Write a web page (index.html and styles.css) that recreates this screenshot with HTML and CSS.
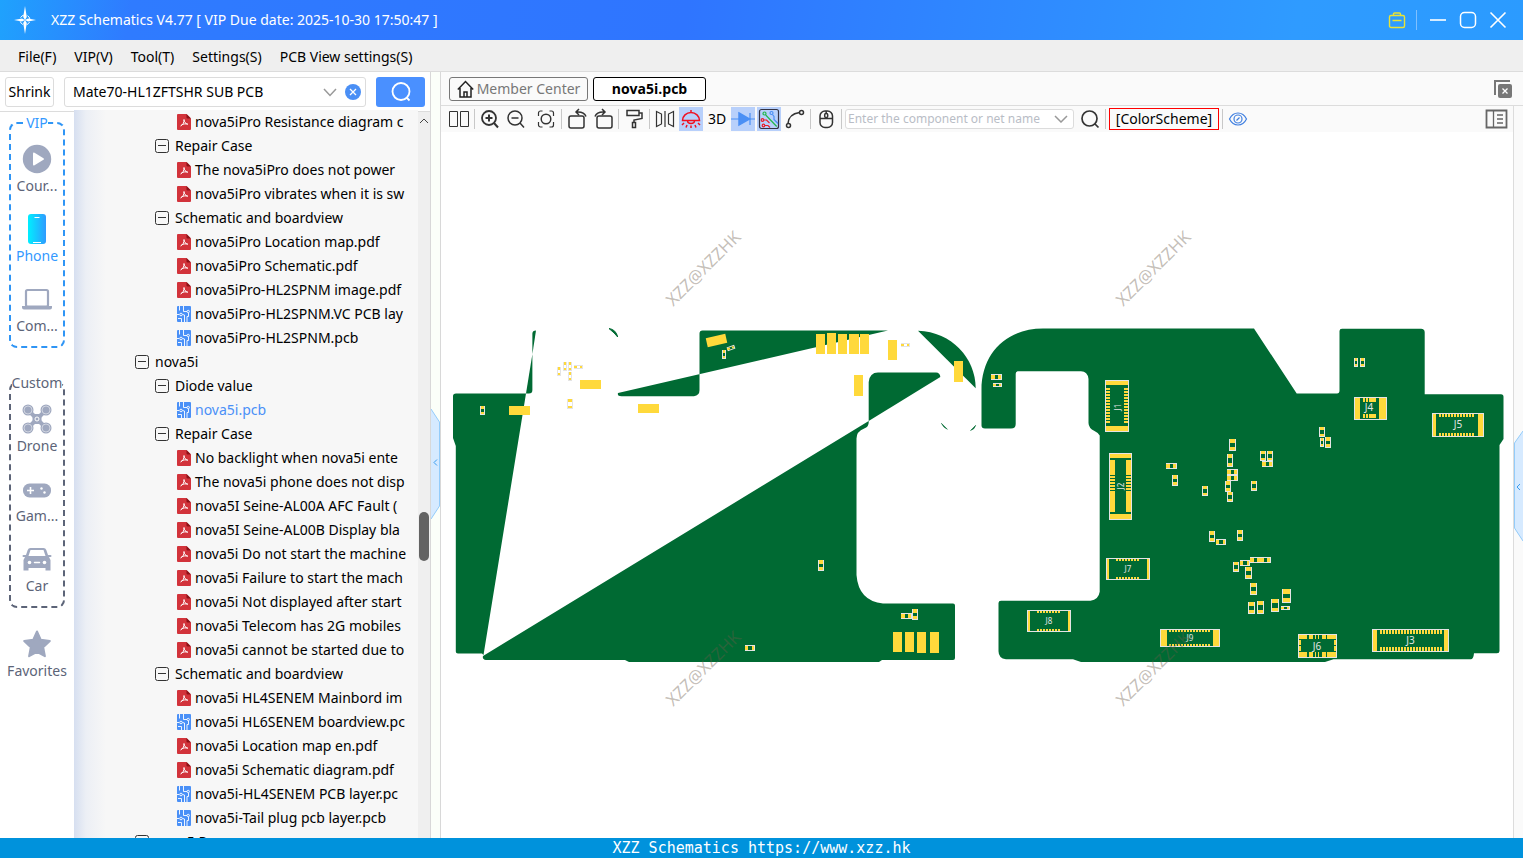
FILE: index.html
```html
<!DOCTYPE html>
<html lang="en">
<head>
  <meta charset="UTF-8">
  <meta name="viewport" content="width=device-width, initial-scale=1.0">
  <title>XZZ Schematics</title>
  <link rel="stylesheet" href="styles.css">
</head>
<body>
  <!-- Shared tree icons -->
  <svg class="sprite" aria-hidden="true">
    <symbol id="i-pdf" viewBox="0 0 14 16">
      <path d="M1 0h8.500L14 4.500V15a1 1 0 0 1-1 1H1a1 1 0 0 1-1-1V1a1 1 0 0 1 1-1z" fill="#d2333b"/>
      <path d="M9.500 0 14 4.500H10.500a1 1 0 0 1-1-1z" fill="#8c1218"/>
      <path d="M7 5.500c.3 3-1.200 5.500-3.500 6.500M7 5.500c0 2.500 1.500 4 4 4.800M4.500 10.800c2-.9 4-1.200 6-.7" fill="none" stroke="#fff"/>
    </symbol>
    <symbol id="i-pcb" viewBox="0 0 14 16">
      <rect width="14" height="16" rx="1" fill="#4a90f7"/>
      <path d="M2.500 0v4.500M6.500 0v5.500h3.500M0 8.500h2M5.500 8.500l2 .5v7M10 16v-5.500h1.500V7M4.500 16v-3.500H1" fill="none" stroke="#fff" stroke-width=".9"/>
      <g fill="#4a90f7" stroke="#fff" stroke-width=".9"><circle cx="11.200" cy="5.500" r="1.200"/><circle cx="4" cy="8.500" r="1.300"/></g>
    </symbol>
    <symbol id="i-minus" viewBox="0 0 14 14">
      <rect x=".5" y=".5" width="13" height="13" rx="2" fill="none" stroke="#333"/>
      <path d="M3 6.500h8" stroke="#333"/>
    </symbol>
  </svg>

  <header class="titlebar">
    <svg class="logo" viewBox="0 0 24 30">
      <path d="M12 1l1.800 11L12 15l-1.800-3zM12 29l-1.800-11L12 15l1.800 3zM1 15l8-1.500 3 1.500-3 1.500zM23 15l-8-1.500-3 1.500 3 1.500z" fill="#fff"/>
      <circle cx="12" cy="15" r="5" fill="none" stroke="#fff" stroke-dasharray="4 3.850" stroke-dashoffset="-2"/>
    </svg>
    <h1 class="app-title">XZZ Schematics V4.77 [ VIP Due date: 2025-10-30 17:50:47 ]</h1>
    <button class="win-btn toolbox" aria-label="Toolbox">
      <svg viewBox="0 0 18 18" fill="none" stroke="#e8e337" stroke-width="1.400"><rect x="1.500" y="4.500" width="15" height="12" rx="1.500"/><path d="M5.500 4.500V3a1 1 0 0 1 1-1h5a1 1 0 0 1 1 1v1.500M4.500 9.500h9"/></svg>
    </button>
    <span class="win-sep"></span>
    <button class="win-btn" aria-label="Minimize">
      <svg viewBox="0 0 18 18" stroke="#fff" stroke-width="1.600"><path d="M1 9h16"/></svg>
    </button>
    <button class="win-btn" aria-label="Maximize">
      <svg viewBox="0 0 18 18" fill="none" stroke="#fff" stroke-width="1.500"><rect x="1.500" y="1.500" width="15" height="15" rx="4"/></svg>
    </button>
    <button class="win-btn" aria-label="Close">
      <svg viewBox="0 0 18 18" stroke="#fff" stroke-width="1.600"><path d="M1.500 1.500l15 15M16.500 1.500l-15 15"/></svg>
    </button>
  </header>

  <nav class="menubar">
    <button>File(F)</button>
    <button>VIP(V)</button>
    <button>Tool(T)</button>
    <button>Settings(S)</button>
    <button>PCB View settings(S)</button>
  </nav>

  <main class="workspace">
    <section class="left">
      <form class="search-row">
        <button type="button" class="shrink">Shrink</button>
        <div class="combo">
          <input type="text" aria-label="Search model" value="Mate70-HL1ZFTSHR SUB PCB">
          <button type="button" aria-label="History"><svg width="14" height="9" viewBox="0 0 14 9" fill="none" stroke="#999" stroke-width="1.500"><path d="M1 1l6 6.500L13 1"/></svg></button>
          <button type="button" aria-label="Clear"><svg width="16" height="16" viewBox="0 0 16 16"><circle cx="8" cy="8" r="8" fill="#4a8ff5"/><path d="M5 5l6 6M11 5l-6 6" stroke="#fff" stroke-width="1.300"/></svg></button>
        </div>
        <button type="button" class="search-btn" aria-label="Search">
          <svg width="20" height="20" viewBox="0 0 20 20" fill="none" stroke="#fff" stroke-width="1.800"><circle cx="10" cy="9.500" r="8.500"/><path d="M15.500 15.500l3 3"/></svg>
        </button>
      </form>

      <div class="left-body">
        <aside class="sidebar">
          <fieldset class="group vip">
            <legend>VIP</legend>
            <button class="cat">
              <svg viewBox="0 0 30 30"><circle cx="15" cy="15" r="14.200" fill="#9fa8bf"/><path d="M11 9.500v11a1 1 0 0 0 1.500.8l9-5.500a1 1 0 0 0 0-1.600l-9-5.500a1 1 0 0 0-1.500.8z" fill="#fff"/></svg>
              <span>Cour...</span>
            </button>
            <button class="cat active">
              <svg viewBox="0 0 30 30"><defs><linearGradient id="phone"><stop offset="0" stop-color="#00efff"/><stop offset="1" stop-color="#2f9bff"/></linearGradient></defs><rect x="6" y="0" width="18" height="30" rx="3" fill="url(#phone)"/><path d="M12.500 3.500h5M11 28.500h8" stroke="#fff" stroke-width="1.200"/></svg>
              <span>Phone</span>
            </button>
            <button class="cat">
              <svg viewBox="0 0 30 30"><rect x="4" y="6" width="22" height="16.500" rx="1.500" fill="none" stroke="#9fa8bf" stroke-width="2.200"/><path d="M0 22h11l1.500 1h5l1.500-1h11v1.500a2 2 0 0 1-2 2H2a2 2 0 0 1-2-2z" fill="#9fa8bf"/></svg>
              <span>Com...</span>
            </button>
          </fieldset>
          <fieldset class="group custom">
            <legend>Custom</legend>
            <button class="cat">
              <svg viewBox="0 0 30 30"><path d="M6 6l18 18M24 6L6 24" stroke="#9fa8bf" stroke-width="4"/><rect x="10.500" y="10" width="9" height="10" rx="3" fill="#9fa8bf"/><circle cx="15" cy="15" r="2" fill="#9fa8bf" stroke="#fff"/><g fill="#9fa8bf"><circle cx="6" cy="6" r="5.500"/><circle cx="24" cy="6" r="5.500"/><circle cx="6" cy="24" r="5.500"/><circle cx="24" cy="24" r="5.500"/></g><g fill="none" stroke="#fff" stroke-width=".5"><circle cx="6" cy="6" r="4"/><circle cx="24" cy="6" r="4"/><circle cx="6" cy="24" r="4"/><circle cx="24" cy="24" r="4"/></g></svg>
              <span>Drone</span>
            </button>
            <button class="cat">
              <svg viewBox="0 0 30 30"><rect x="1" y="9.500" width="28" height="14" rx="6.500" fill="#9fa8bf"/><path d="M8.500 13v7M5 16.500h7" stroke="#fff" stroke-width="1.600"/><circle cx="19.500" cy="14.500" r="1.200" fill="#fff"/><circle cx="22.500" cy="18.500" r="1.200" fill="#fff"/></svg>
              <span>Gam...</span>
            </button>
            <button class="cat">
              <svg viewBox="0 0 30 30"><path fill-rule="evenodd" d="M8.500 4h13a3 3 0 0 1 2.800 2l1.700 5h2.500a.8.800 0 0 1 0 2H27l1.500 3v10.500h-5V24h-17v2.500h-5V16L3 13H1.500a.8.800 0 0 1 0-2H4l1.700-5A3 3 0 0 1 8.500 4zM8.500 6L6.500 12h17l-2-6z" fill="#9fa8bf"/><circle cx="7.500" cy="18.500" r="1.800" fill="#fff"/><circle cx="22.500" cy="18.500" r="1.800" fill="#fff"/><path d="M12.500 18.500h5" stroke="#fff" stroke-width="1.500" stroke-linecap="round"/></svg>
              <span>Car</span>
            </button>
          </fieldset>
          <button class="cat favorites">
            <svg viewBox="0 0 30 30"><path d="M15 2.500l3.800 8.300 9 1.200-6.600 6.200 1.700 9L15 22.800l-7.900 4.400 1.700-9L2.200 12l9-1.200z" fill="#9fa8bf" stroke="#9fa8bf" stroke-width="2" stroke-linejoin="round"/></svg>
            <span>Favorites</span>
          </button>
        </aside>

        <ul class="tree">
          <li class="file"><svg><use href="#i-pdf"/></svg><a href="#">nova5iPro Resistance diagram c</a></li>
          <li class="folder"><svg><use href="#i-minus"/></svg><span>Repair Case</span></li>
          <li class="file"><svg><use href="#i-pdf"/></svg><a href="#">The nova5iPro does not power</a></li>
          <li class="file"><svg><use href="#i-pdf"/></svg><a href="#">nova5iPro vibrates when it is sw</a></li>
          <li class="folder"><svg><use href="#i-minus"/></svg><span>Schematic and boardview</span></li>
          <li class="file"><svg><use href="#i-pdf"/></svg><a href="#">nova5iPro Location map.pdf</a></li>
          <li class="file"><svg><use href="#i-pdf"/></svg><a href="#">nova5iPro Schematic.pdf</a></li>
          <li class="file"><svg><use href="#i-pdf"/></svg><a href="#">nova5iPro-HL2SPNM image.pdf</a></li>
          <li class="file"><svg><use href="#i-pcb"/></svg><a href="#">nova5iPro-HL2SPNM.VC PCB lay</a></li>
          <li class="file"><svg><use href="#i-pcb"/></svg><a href="#">nova5iPro-HL2SPNM.pcb</a></li>
          <li class="model"><svg><use href="#i-minus"/></svg><span>nova5i</span></li>
          <li class="folder"><svg><use href="#i-minus"/></svg><span>Diode value</span></li>
          <li class="file current"><svg><use href="#i-pcb"/></svg><a href="#">nova5i.pcb</a></li>
          <li class="folder"><svg><use href="#i-minus"/></svg><span>Repair Case</span></li>
          <li class="file"><svg><use href="#i-pdf"/></svg><a href="#">No backlight when nova5i ente</a></li>
          <li class="file"><svg><use href="#i-pdf"/></svg><a href="#">The nova5i phone does not disp</a></li>
          <li class="file"><svg><use href="#i-pdf"/></svg><a href="#">nova5I Seine-AL00A AFC Fault (</a></li>
          <li class="file"><svg><use href="#i-pdf"/></svg><a href="#">nova5I Seine-AL00B Display bla</a></li>
          <li class="file"><svg><use href="#i-pdf"/></svg><a href="#">nova5i Do not start the machine</a></li>
          <li class="file"><svg><use href="#i-pdf"/></svg><a href="#">nova5i Failure to start the mach</a></li>
          <li class="file"><svg><use href="#i-pdf"/></svg><a href="#">nova5i Not displayed after start</a></li>
          <li class="file"><svg><use href="#i-pdf"/></svg><a href="#">nova5i Telecom has 2G mobiles</a></li>
          <li class="file"><svg><use href="#i-pdf"/></svg><a href="#">nova5i cannot be started due to</a></li>
          <li class="folder"><svg><use href="#i-minus"/></svg><span>Schematic and boardview</span></li>
          <li class="file"><svg><use href="#i-pdf"/></svg><a href="#">nova5i HL4SENEM Mainbord im</a></li>
          <li class="file"><svg><use href="#i-pcb"/></svg><a href="#">nova5i HL6SENEM boardview.pc</a></li>
          <li class="file"><svg><use href="#i-pdf"/></svg><a href="#">nova5i Location map en.pdf</a></li>
          <li class="file"><svg><use href="#i-pdf"/></svg><a href="#">nova5i Schematic diagram.pdf</a></li>
          <li class="file"><svg><use href="#i-pcb"/></svg><a href="#">nova5i-HL4SENEM PCB layer.pc</a></li>
          <li class="file"><svg><use href="#i-pcb"/></svg><a href="#">nova5i-Tail plug pcb layer.pcb</a></li>
          <li class="model"><svg><use href="#i-minus"/></svg><span>nova5 Pro</span></li>
        </ul>

        <div class="scrollbar">
          <svg width="10" height="6" viewBox="0 0 10 6" fill="none" stroke="#444"><path d="M1 5l4-4 4 4"/></svg>
          <div class="thumb"></div>
        </div>
      </div>
    </section>

    <div class="splitter">
      <button class="handle" aria-label="Collapse left panel">
        <svg width="9" height="110" viewBox="0 0 9 110"><path d="M0 0l8.500 13v84L0 110" fill="#d6eaff" stroke="#93ccfa"/><path d="M6 50.500l-3 3 3 3" fill="none" stroke="#3a9df0"/></svg>
      </button>
    </div>

    <section class="right">
      <div class="tabs">
        <button class="tab home">
          <svg width="17" height="18" viewBox="0 0 17 18" fill="none" stroke="#222" stroke-width="1.500"><path d="M.8 9.500L8.500 1.500l7.700 8M3 8v9h11V8M7 17v-5h3v5"/></svg>
          Member Center
        </button>
        <button class="tab open">nova5i.pcb</button>
        <button class="close-all" aria-label="Close all tabs">
          <svg width="18" height="18" viewBox="0 0 18 18"><path d="M1 15V1h15" fill="none" stroke="#777" stroke-width="2"/><rect x="4" y="4" width="14" height="14" rx="2" fill="#777"/><path d="M8.500 8.500l5 5M13.500 8.500l-5 5" stroke="#fff" stroke-width="1.300"/></svg>
        </button>
      </div>

      <div class="right-body">
        <div class="viewer">
          <div class="toolbar">
            <button class="tool" aria-label="Split view"><svg viewBox="0 0 24 24"><path d="M2.500 4.500h8v15h-8zM13.500 4.500h8v15h-8z" stroke-width="1"/></svg></button>
            <span class="sep"></span>
            <button class="tool" aria-label="Zoom in"><svg viewBox="0 0 24 24"><circle cx="11" cy="11" r="7" stroke-width="1.800"/><path d="M16 16l4 4.500M7.500 11h7M11 7.500v7" stroke-width="2"/></svg></button>
            <button class="tool" aria-label="Zoom out"><svg viewBox="0 0 24 24"><circle cx="11" cy="11" r="7"/><path d="M16 16l4 4.500M7.500 11h7"/></svg></button>
            <button class="tool fit" aria-label="Fit"><svg viewBox="0 0 24 24"><circle cx="12" cy="12" r="4.800"/><path d="M4.500 9V6a2 2 0 0 1 2-2h2M15.500 4h2a2 2 0 0 1 2 2v3M19.500 15v3a2 2 0 0 1-2 2h-2M8.500 20h-2a2 2 0 0 1-2-2v-3" stroke-width="1.200"/></svg></button>
            <span class="sep"></span>
            <button class="tool" aria-label="Rotate left"><svg viewBox="0 0 24 24"><rect x="4" y="9" width="15" height="12" rx="2"/><path d="M14 2l-3 3 3 3M11 5c5-.5 8.500.5 10 4.500"/></svg></button>
            <button class="tool" aria-label="Rotate right"><svg viewBox="0 0 24 24"><rect x="6" y="9" width="15" height="12" rx="2"/><path d="M11 2l3 3-3 3M14 5c-5-.5-8.500.5-10 4.500"/></svg></button>
            <span class="sep"></span>
            <button class="tool" aria-label="Paint"><svg viewBox="0 0 24 24"><path d="M5 3.500h12v5H5zM17 6h3v5.500l-8 1.500v3M10.500 15.500h3v5h-3z"/></svg></button>
            <span class="sep"></span>
            <button class="tool" aria-label="Mirror"><svg viewBox="0 0 24 24"><path d="M12 4v16M3.500 4.500l5 2.500v10l-5 2.500zM20.500 4.500l-5 2.500v10l5 2.500z" stroke-width="1.200"/></svg></button>
            <button class="tool on lamp" aria-label="Highlight"><svg viewBox="0 0 24 24"><path d="M3.500 13.500a8.500 8 0 0 1 17 0zM12 3v3M8.500 13.500c0 4 7 4 7 0M5 16l-2 2M8 18l-1 2.500M16 18l1 2.500M19 16l2 2M12 18.500V21"/></svg></button>
            <button class="tool text">3D</button>
            <button class="tool on diode" aria-label="Diode mode"><svg viewBox="0 0 24 24"><path d="M0 12h24M19 6v12" stroke-width="1.200"/><path d="M8 6l10.500 6L8 18z" fill="#4a8ff5"/></svg></button>
            <button class="tool on nets" aria-label="Net lines"><svg viewBox="0 0 24 24"><rect x="2.500" y="2.500" width="19" height="19" rx="2" stroke="#334"/><g stroke="#22b84a"><circle cx="7.500" cy="6.500" r="1.500"/><path d="M8.700 8l11 11.500"/></g><g stroke="#4a8ff5"><circle cx="14.500" cy="6" r="1.500"/><path d="M15.500 7.500l1.500 2v3l4 4"/></g><g stroke="#e8202a"><circle cx="5.500" cy="13" r="1.300"/><path d="M7 13h2.500l3 3"/><circle cx="6.500" cy="18.500" r="1.300"/><path d="M8 18.500h3l2 2"/></g></svg></button>
            <button class="tool" aria-label="Curve"><svg viewBox="0 0 24 24"><circle cx="5.500" cy="18.500" r="2"/><circle cx="18.500" cy="5.500" r="2"/><path d="M5 16.500C5.500 10 9 6.500 16.500 5.500"/></svg></button>
            <span class="sep"></span>
            <button class="tool" aria-label="Mouse"><svg viewBox="0 0 24 24"><rect x="6" y="4" width="12.500" height="16.500" rx="5"/><path d="M6 11.500h12.500M12.200 4v3"/><rect x="10.700" y="6.500" width="3" height="4" rx="1.300"/></svg></button>
            <span class="sep"></span>
            <div class="net-combo">
              <input type="text" aria-label="Component or net name" placeholder="Enter the component or net name">
              <button type="button" aria-label="Recent"><svg width="14" height="8" viewBox="0 0 14 8" fill="none" stroke="#999" stroke-width="1.500"><path d="M1 1l6 6 6-6"/></svg></button>
            </div>
            <button class="tool" aria-label="Find"><svg viewBox="0 0 24 24"><circle cx="11.500" cy="11.500" r="7.500" stroke-width="1.700"/><path d="M17 17l3.500 3.500" stroke-width="1.700"/></svg></button>
            <span class="sep"></span>
            <button class="scheme">[ColorScheme]</button>
            <span class="sep"></span>
            <button class="tool eye" aria-label="Visibility"><svg viewBox="0 0 24 24"><path d="M3.500 12c4-8 13-8 17 0-4 8-13 8-17 0z"/><circle cx="12" cy="12" r="4"/><path d="M10.500 13.500l3-3"/></svg></button>
            <button class="tool panel" aria-label="Side panel"><svg viewBox="0 0 24 24"><path d="M1.500 3.500h20v17h-20z" stroke-width="1.800"/><path d="M8.500 3.500v17M12 8h6M12 12h6M12 16h6" stroke-width="1.300"/></svg></button>
          </div>

          <svg class="board" viewBox="441 132 1072 706">
            <!-- left board, filled across its own outline -->
            <g class="copper">
              <path d="M456 393.500H526L483.500 655 482 653.500H458q-2.200 0-2.200-2V446l-2.800-8V396q0-2.500 3-2.500z"/>
              <path d="M536 330.500L532.400 354V333.500q0-3 3.600-3z"/>
              <path d="M532.400 354V390q0 3.500-3.500 3.500H526z"/>
              <path d="M609 328.500q7 1 8.700 8.500-3-4-8.700-8.500z" stroke="#006a33"/>
              <path d="M702.500 330.500H888L618 393q-1 3.300 3.500 3.300H694q5.500-1 5.500-6V333.500q0-3 3-3z"/>
              <path d="M918 330.700C952 332 975.500 358 975.700 388.300z"/>
              <path d="M878 372.500H936q4 0 4.300 4.500L868.700 421V382q1-9.500 9.300-9.500z"/>
              <path d="M868.700 421q.5 6-4.500 7.500-7.700 3-7.700 10V575q2 26 26.500 28.500H953q2 0 2 2V658q0 2-2 2H882l-3 2H629l-4-2H486q-4-.5-3-4z"/>
              <path d="M941.400 423.300q2 4.500 6 6zM970.500 430.500q4-1 5.200-5.200z" stroke="#006a33" stroke-width=".5"/>
            </g>
            <!-- right board -->
            <path class="copper" d="M1043 328.500H1254L1296.700 393.500H1337q2.500 0 2.500-3V331q0-2.300 2.500-2.300H1421q3.700 0 3.700 3.500V394.300H1501q2.500 0 2.500 2.500V439l-4 6V651q0 2.300-2.500 2.300H1474q-.5 6-3.300 6H1333.500l-8.500 2.700H1081l-8-2.700H1006q-7.500-1-7.500-8V603q0-2.300 2.500-2.300H1090.500q8-1 9.200-9V435.500q-1-2.500-5.200-4.500-6-3-6-8V379q-1-8-8-7.700H1018q-2.300 0-2.300 2.500V424q0 4.500-4.700 4.500H985q-3.500 0-3.500-3V390C981.500 352 1008 328.500 1043 328.500z"/>
            <g id="parts"></g>
            <g class="watermark">
              <text transform="translate(703 268) rotate(-45)">XZZ@XZZHK</text>
              <text transform="translate(1153 268) rotate(-45)">XZZ@XZZHK</text>
              <text transform="translate(703 668) rotate(-45)">XZZ@XZZHK</text>
              <text transform="translate(1153 668) rotate(-45)">XZZ@XZZHK</text>
            </g>
          </svg>
        </div>
        <div class="rail">
          <button class="handle" aria-label="Expand right panel">
            <svg width="9" height="110" viewBox="0 0 9 110"><path d="M9 0L.5 12v85L9 110" fill="#d6eaff" stroke="#93ccfa"/><path d="M6 53l-3 3 3 3" fill="none" stroke="#3a9df0"/></svg>
          </button>
        </div>
      </div>
    </section>
  </main>

  <footer class="statusbar">XZZ Schematics https://www.xzz.hk</footer>

  <script src="board.js"></script>
</body>
</html>
```

FILE: styles.css
```css
* { box-sizing: border-box; margin: 0; padding: 0; }
body {
  display: flex;
  flex-direction: column;
  height: 100vh;
  overflow: hidden;
  background-color: #fff;
  color: #000;
  font-family: "Noto Sans", "Open Sans", sans-serif;
  font-size: 14px;
  line-height: 20px;
}
button {
  border: none;
  background: none;
  color: inherit;
  font: inherit;
  cursor: pointer;
}
input {
  border: none;
  background: none;
  color: inherit;
  font: inherit;
  outline: none;
}
svg { display: block; flex-shrink: 0; }
.sprite { position: absolute; width: 0; height: 0; }

/* Title bar */
.titlebar {
  display: flex;
  align-items: center;
  gap: 12px;
  height: 40px;
  padding: 0 16px 0 13px;
  background: linear-gradient(100deg, #1fa2fd 0, #2f7bff 130px, #2f75ff 45%, #2f9bff 85%, #2b9bff 100%);
  color: #fff;
}
.logo { width: 24px; height: 30px; }
.app-title {
  flex: 1;
  padding-left: 2px;
  font-size: 14px;
  font-weight: normal;
}
.win-btn svg { width: 18px; height: 18px; }
.toolbox { margin-right: -2px; }
.win-sep {
  width: 1px;
  height: 20px;
  background-color: #7fc0ff;
}

/* Menu */
.menubar {
  display: flex;
  align-items: center;
  gap: 18px;
  height: 32px;
  padding: 2px 18px 0;
  background-color: #efefef;
  border-bottom: 1px solid #dcdcdc;
}

.workspace {
  display: flex;
  flex: 1;
  min-height: 0;
}

/* Left panel */
.left {
  display: flex;
  flex-direction: column;
  width: 431px;
  border-right: 1px solid #d8d8d8;
}
.search-row {
  display: flex;
  align-items: center;
  gap: 10px;
  height: 40px;
  padding: 1px 5px 0;
  border-bottom: 1px solid #dcdcdc;
}
.shrink {
  width: 49px;
  height: 30px;
  border: 1px solid #dcdcdc;
  border-radius: 3px;
}
.combo {
  display: flex;
  align-items: center;
  flex: 1;
  gap: 8px;
  height: 30px;
  padding: 0 4px 0 8px;
  border: 1px solid #dcdcdc;
  border-radius: 3px;
}
.combo input { flex: 1; min-width: 0; }
.search-btn {
  display: flex;
  align-items: center;
  justify-content: center;
  width: 49px;
  height: 30px;
  border-radius: 3px;
  background-color: #4a90ff;
}
.left-body {
  display: flex;
  flex: 1;
  min-height: 0;
}

/* Categories */
.sidebar {
  width: 74px;
  overflow: hidden;
}
.group {
  min-width: 0;
  margin: 0 9px;
  border: 2px dashed #2f95f5;
  border-radius: 8px;
}
.group legend {
  margin: 0 auto;
  line-height: 22px;
}
.vip { padding-top: 2px; }
.vip legend { color: #3399ff; }
.custom {
  margin-top: 24px;
  padding-top: 2px;
  border-color: #5c6478;
}
.custom legend { color: #5c6478; }
.cat {
  display: flex;
  flex-direction: column;
  align-items: center;
  gap: 2px;
  width: 100%;
  height: 70px;
  padding-top: 8px;
  color: #5c6478;
}
.cat svg { width: 30px; height: 30px; }
.cat.active { color: #3399ff; }
.favorites { margin-top: 13px; }

/* File tree */
.tree {
  flex: 1;
  min-width: 0;
  overflow: hidden;
  margin-top: -2px;
  padding-right: 12px;
  list-style: none;
  background: linear-gradient(90deg, #d6dff0 0, #eceff5 12px, #f7f7f7 32px);
}
.tree li {
  display: flex;
  align-items: center;
  gap: 4px;
  height: 24px;
  white-space: nowrap;
  overflow: hidden;
}
.tree svg { width: 14px; height: 16px; }
.tree a { color: inherit; text-decoration: none; }
.tree .model { padding-left: 61px; gap: 6px; }
.tree .folder { padding-left: 81px; gap: 6px; }
.tree .file { padding-left: 103px; }
.tree .current { color: #4a90f7; }

.scrollbar {
  display: flex;
  flex-direction: column;
  align-items: center;
  justify-content: space-between;
  width: 12px;
  padding: 6px 0 277px;
  background-color: #efefef;
}
.thumb {
  width: 10px;
  height: 49px;
  border-radius: 5px;
  background-color: #636363;
}

.splitter {
  display: flex;
  align-items: center;
  width: 10px;
  padding-top: 18px;
  background-color: #fbfff9;
  border-right: 1px solid #d8d8d8;
}

/* Right panel */
.right {
  display: flex;
  flex-direction: column;
  flex: 1;
  min-width: 0;
}
.tabs {
  display: flex;
  align-items: center;
  gap: 5px;
  height: 34px;
  padding: 0 11px 0 8px;
  background-color: #fafafa;
  border-bottom: 1px solid #dcdcdc;
}
.tab {
  display: flex;
  align-items: center;
  justify-content: center;
  gap: 3px;
  height: 24px;
  border-radius: 3px;
}
.home {
  width: 139px;
  border: 1px solid #777;
  color: #777;
}
.open {
  width: 113px;
  border: 1px solid #000;
  background-color: #fff;
  font-family: "Open Sans", sans-serif;
  font-weight: bold;
}
.close-all { margin-left: auto; }

.right-body {
  display: flex;
  flex: 1;
  min-height: 0;
}
.viewer {
  display: flex;
  flex-direction: column;
  flex: 1;
  min-width: 0;
}
.toolbar {
  display: flex;
  align-items: center;
  gap: 2px;
  height: 26px;
  padding: 0 4px 0 6px;
  background-color: #fafafa;
}
.sep {
  width: 1px;
  height: 20px;
  margin: 0 1px;
  background-color: #c8c8c8;
}
.tool {
  width: 24px;
  height: 24px;
  flex-shrink: 0;
}
.tool svg {
  width: 24px;
  height: 24px;
  fill: none;
  stroke: #333;
  stroke-width: 1.5;
}
.tool.on { background-color: #b8d0fb; }
.fit { margin-left: 4px; }
.lamp svg { stroke: #f01020; }
.diode svg { stroke: #4a8ff5; }
.nets svg { stroke-width: 1.2; }
.eye svg { stroke: #3f7fe0; stroke-width: 1.2; }
.panel { margin-left: auto; }
.panel svg { stroke: #666; }
.net-combo {
  display: flex;
  align-items: center;
  gap: 6px;
  width: 229px;
  height: 20px;
  margin-right: 2px;
  padding: 0 5px 0 2px;
  border: 1px solid #dcdcdc;
  border-radius: 3px;
  background-color: #fff;
}
.net-combo input {
  flex: 1;
  min-width: 0;
  font-size: 12px;
}
.net-combo input::placeholder { color: #b9bdc6; }
.scheme {
  width: 110px;
  height: 22px;
  border: 1px solid #f00;
}
.rail {
  display: flex;
  align-items: center;
  width: 10px;
  padding-top: 28px;
  background-color: #fafafa;
  border-left: 1px solid #dcdcdc;
}

/* Board view */
.board {
  flex: 1;
  width: 100%;
  min-height: 0;
}
.copper { fill: #006a33; }
.pad { fill: #ffd93b; }
.outline {
  fill: none;
  stroke: #e4e4e4;
}
.ref {
  fill: #e4e4e4;
  font-size: 8px;
  text-anchor: middle;
}
.ref.big { font-size: 10px; }
.watermark text {
  fill: #6a5a4a;
  fill-opacity: .4;
  font-size: 17px;
  text-anchor: middle;
  dominant-baseline: central;
}

.statusbar {
  height: 20px;
  background-color: #0092dc;
  color: #fff;
  font-family: "DejaVu Sans Mono", monospace;
  font-size: 15px;
  line-height: 21px;
  text-align: center;
}
```

FILE: board.js
```js
const NS = 'http://www.w3.org/2000/svg';
const parts = document.getElementById('parts');

function add(tag, attrs, parent = parts) {
  const el = document.createElementNS(NS, tag);
  for (const k in attrs) el.setAttribute(k, attrs[k]);
  parent.appendChild(el);
  return el;
}
function pad(x, y, width, height, parent) {
  add('rect', { class: 'pad', x, y, width, height }, parent);
}
function outline(x, y, w, h, parent) {
  add('rect', { class: 'outline', x: x + 0.5, y: y + 0.5, width: w - 1, height: h - 1 }, parent);
}

// Test points: x, y, width, height
[
  [509, 406, 21, 9], [580, 380, 21, 9], [638, 404, 21, 9],
  [816, 334, 9, 20], [827, 333, 9, 21], [838, 334, 9, 20], [849, 334, 10, 20], [860, 334, 9, 20],
  [888, 340, 9, 20], [854, 375, 9, 21], [954, 361, 9, 21],
  [893, 632, 9, 20], [905, 632, 9, 20], [917, 632, 9, 21], [930, 632, 9, 21]
].forEach(p => pad(...p));
const tilted = add('g', { transform: 'rotate(-13 716.5 340.5)' });
pad(706.5, 336, 20, 9, tilted);

// Two-pad chips, pads sit on the short ends
function chip(x, y, w, h, parent) {
  outline(x, y, w, h, parent);
  if (w > h) {
    const s = Math.round(w / 3);
    pad(x, y + 1, s, h - 2, parent);
    pad(x + w - s, y + 1, s - 1, h - 2, parent);
  } else {
    const s = Math.round(h / 3);
    pad(x + 1, y, w - 2, s, parent);
    pad(x + 1, y + h - s, w - 2, s - 1, parent);
  }
}
[
  [480, 406, 5, 9], [557, 367, 4, 9], [563, 362, 4, 9], [568, 362, 4, 9], [568, 372, 4, 9],
  [574, 365, 9, 4], [567, 399, 6, 10], [722, 350, 4, 9], [901, 343, 9, 4], [818, 560, 6, 11],
  [745, 645, 10, 6], [901, 613, 11, 6], [912, 609, 6, 11],
  [991, 374, 11, 6], [993, 383, 9, 4], [1166, 463, 11, 6], [1172, 475, 6, 11], [1202, 486, 6, 10],
  [1229, 439, 7, 12], [1227, 454, 6, 13], [1227, 469, 11, 6], [1227, 475, 11, 6], [1225, 481, 6, 11],
  [1227, 492, 6, 10], [1209, 531, 6, 11], [1216, 539, 10, 6], [1237, 530, 6, 11], [1233, 562, 6, 10],
  [1240, 560, 10, 6], [1354, 358, 4, 9], [1360, 358, 5, 9], [1319, 427, 6, 10], [1320, 438, 4, 9],
  [1325, 437, 6, 11], [1260, 451, 6, 10], [1267, 451, 6, 10], [1262, 461, 11, 6], [1251, 481, 6, 10],
  [1250, 557, 11, 6], [1260, 557, 11, 6], [1245, 567, 7, 12], [1250, 583, 7, 12], [1248, 602, 7, 12],
  [1257, 601, 7, 13], [1271, 599, 8, 13], [1282, 589, 9, 14], [1281, 606, 9, 4]
].forEach(c => chip(...c));
chip(727, 346, 8, 4, add('g', { transform: 'rotate(-20 731 348)' }));

// Connectors
function label(name, x, y, size, turned) {
  const t = add('text', { class: 'ref ' + size, x, y });
  if (turned) t.setAttribute('transform', `rotate(-90 ${x} ${y})`);
  t.textContent = name;
}
// name, label size, x, y, w, h, left pad, right pad, teeth start, teeth end, tooth height, pitch
[
  ['J7', '', 1106, 558, 44, 22, 3, 3, 1116, 1140, 3, 3],
  ['J8', '', 1027, 610, 44, 22, 3, 3, 1037, 1061, 3, 3],
  ['J9', '', 1160, 629, 60, 18, 7, 7, 1169, 1210, 3, 3],
  ['J3', 'big', 1372, 629, 77, 23, 5, 5, 1380, 1442, 5, 3],
  ['J5', 'big', 1432, 413, 52, 24, 4, 6, 1439, 1475, 4, 3]
].forEach(([name, size, x, y, w, h, lp, rp, from, to, th, pitch]) => {
  pad(x, y, lp, h);
  pad(x + w - rp, y, rp, h);
  for (let tx = from; tx < to; tx += pitch) {
    pad(tx, y + 1, 2, th - 1);
    pad(tx, y + h - th, 2, th - 1);
  }
  outline(x, y, w, h);
  label(name, x + w / 2, y + h / 2 + 3, size);
});

pad(1354, 397, 6, 23);
pad(1379, 397, 8, 23);
[[1363, 2], [1366, 2], [1369, 7]].forEach(([x, w]) => { pad(x, 398, w, 4); pad(x, 414, w, 4); });
outline(1354, 397, 33, 23);
label('J4', 1369, 411, 'big');

[[1298, 9], [1309, 4], [1315, 1], [1318, 1], [1322, 4], [1327, 9]].forEach(([x, w]) => { pad(x, 634, w, 5); pad(x, 652, w, 5); });
[1298, 1334].forEach(x => { pad(x, 640, 3, 5); pad(x, 646, 3, 5); });
outline(1298, 634, 39, 24);
label('J6', 1317, 650, 'big');

pad(1105, 380, 24, 5);
pad(1105, 426, 24, 5);
for (let y = 388; y < 424; y += 3) { pad(1106, y, 4, 2); pad(1124, y, 4, 2); }
outline(1105, 380, 24, 52);
label('J1', 1121, 407, '', true);

pad(1109, 453, 23, 5);
pad(1109, 514, 23, 5);
[1109, 1126].forEach(x => {
  pad(x, 460, 6, 15);
  for (let y = 476; y < 490; y += 3) pad(x, y, 6, 2);
  pad(x, 491, 6, 21);
});
outline(1109, 453, 23, 67);
label('J2', 1124, 486, '', true);
```
